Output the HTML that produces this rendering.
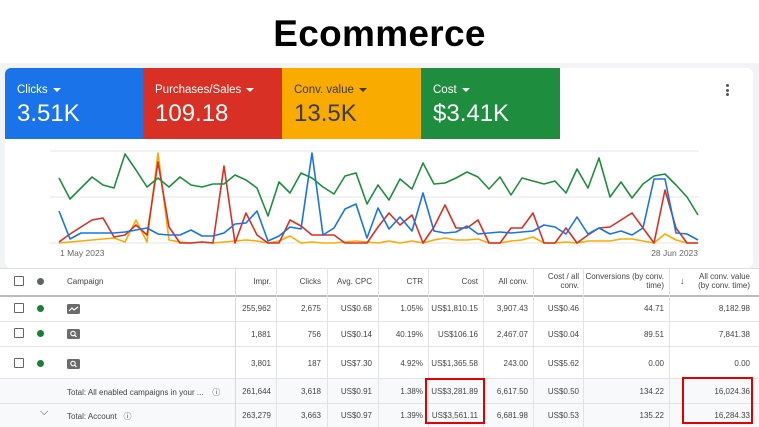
<!DOCTYPE html>
<html><head><meta charset="utf-8"><style>
*{margin:0;padding:0;box-sizing:border-box}
body{width:759px;height:427px;overflow:hidden;background:#fff;font-family:"Liberation Sans",Arial,sans-serif;position:relative}
.title{position:absolute;left:0;width:759px;top:13px;text-align:center;font-weight:bold;font-size:37px;color:#000;letter-spacing:0.3px}
.bg{position:absolute;left:0;top:63px;width:759px;height:205px;background:#f1f3f4}
.card{position:absolute;left:5px;top:68px;width:748px;height:200px;background:#fff;border-radius:6px;overflow:hidden}
.tile{position:absolute;top:0;height:71px;color:#fff}
.tile .l{position:absolute;left:12px;top:16px;font-size:11.5px}
.tile .v{position:absolute;left:12px;top:32px;font-size:24px}
.tri{display:inline-block;width:0;height:0;border-left:4px solid transparent;border-right:4px solid transparent;border-top:4px solid currentColor;margin-left:5px;vertical-align:middle}
.dots{position:absolute;left:721px;top:16px;width:3px}
.dots i{display:block;width:3px;height:3px;background:#555;border-radius:50%;margin-bottom:1.5px}
svg{position:absolute;left:0;top:0}
.tbl{position:absolute;left:0;top:268px;width:759px;height:159px;font-size:8px;color:#444}
.hl{position:absolute;left:0;height:1px;background:#e3e3e3;width:759px}
.vl{position:absolute;width:1px;background:#e3e3e3;top:0;height:159px}
.c{position:absolute;text-align:right}
.cb{position:absolute;left:14px;width:10px;height:10px;border:1.3px solid #666;border-radius:1px}
.dot{position:absolute;left:37px;width:7px;height:7px;border-radius:50%;background:#188038}
.ic{position:absolute;left:67px;width:13px;height:10px;background:#6b6b6b;border-radius:1.5px}
.ic svg{position:absolute;left:0;top:0}
.box{position:absolute;border:2px solid #e00000}
</style></head><body>
<div class="title">Ecommerce</div>
<div class="bg"></div>
<div class="card">
 <div class="tile" style="left:0;width:138px;background:#1a73e8"><div class="l">Clicks<span class="tri"></span></div><div class="v">3.51K</div></div>
 <div class="tile" style="left:138px;width:139px;background:#d93025"><div class="l">Purchases/Sales<span class="tri"></span></div><div class="v">109.18</div></div>
 <div class="tile" style="left:277px;width:139px;background:#f9ab00;color:#3c3c3c"><div class="l">Conv. value<span class="tri"></span></div><div class="v">13.5K</div></div>
 <div class="tile" style="left:416px;width:139px;background:#1e8e3e"><div class="l">Cost<span class="tri"></span></div><div class="v">$3.41K</div></div>
 <div class="dots"><i></i><i></i><i></i></div>
</div>
<svg width="759" height="268" viewBox="0 0 759 268">
<g stroke="#e6e6e6" stroke-width="1"><line x1="50" y1="151" x2="699" y2="151"/><line x1="50" y1="197" x2="699" y2="197"/><line x1="50" y1="243" x2="699" y2="243"/></g>
<g fill="none" stroke-width="1.6" stroke-linejoin="round">
<polyline stroke="#f9ab00" points="59,243 70,242 81,241 92,240 103,239 114,238 125,242 136,220 147,242 158,153 169,240 180,242 191,243 202,242 213,243 224,242 235,241 246,240 257,241 268,243 279,241 290,236 301,243 312,242 323,243 334,243 345,242 356,241 367,242 378,243 389,241 400,243 412,241 423,243 434,240 445,238 456,240 467,240 478,239 489,243 500,243 511,241 522,240 533,237 544,243 555,243 566,242 577,243 588,241 599,241 610,241 621,239 632,239 643,241 654,243 665,234 676,240 687,243 698,243"/>
<polyline stroke="#d93025" points="59,242 70,234 81,227 92,220 103,218 114,237 125,235 136,225 147,235 158,162 169,227 180,243 191,243 202,242 213,243 224,166 235,243 246,213 257,235 268,243 279,243 290,220 301,226 312,235 323,235 334,235 345,243 356,243 367,243 378,227 389,213 400,225 412,215 423,243 434,227 445,205 456,228 467,228 478,220 489,243 500,243 511,228 522,228 533,213 544,243 555,243 566,228 577,243 588,235 599,228 610,227 621,220 632,213 643,228 654,243 665,190 676,228 687,243 698,243"/>
<polyline stroke="#1a73e8" points="59,211 70,239 81,233 92,233 103,233 114,233 125,232 136,230 147,228 158,234 169,235 180,235 191,230 202,236 213,236 224,233 235,224 246,223 257,211 268,241 279,236 290,227 301,229 312,153 323,235 334,228 345,209 356,204 367,238 378,208 389,229 400,217 412,231 423,193 434,231 445,233 456,232 467,226 478,234 489,233 500,232 511,233 522,232 533,231 544,225 555,227 566,234 577,217 588,234 599,228 610,234 621,231 632,235 643,228 654,179 665,179 676,233 687,234 698,240"/>
<polyline stroke="#1e8e3e" points="59,178 70,199 81,188 92,177 103,185 114,188 125,154 136,170 147,187 158,178 169,187 180,177 191,185 202,187 213,184 224,184 235,175 246,180 257,188 268,216 279,182 290,193 301,173 312,178 323,187 334,194 345,176 356,173 367,204 378,185 389,200 400,179 412,189 423,163 434,184 445,183 456,178 467,172 478,177 489,189 500,177 511,195 522,178 533,181 544,184 555,181 566,193 577,169 588,188 599,158 610,197 621,182 632,198 643,184 654,176 665,174 676,185 687,197 698,215"/>
</g>
<text x="60" y="256" font-size="8.5" fill="#666" font-family="Liberation Sans">1 May 2023</text>
<text x="698" y="256" font-size="8.5" fill="#666" font-family="Liberation Sans" text-anchor="end">28 Jun 2023</text>
</svg>
<div class="tbl">
 <div style="position:absolute;left:0;top:110px;width:759px;height:49px;background:#f8f9fa"></div>
 <div class="hl" style="top:0;background:#ddd"></div>
 <div class="hl" style="top:27px;height:1.5px;background:#bbb"></div>
 <div class="hl" style="top:53px"></div>
 <div class="hl" style="top:78px"></div>
 <div class="hl" style="top:110px"></div>
 <div class="hl" style="top:135px"></div>
 <div class="vl" style="left:235px;background:#d8d8d8"></div>
 <div class="vl" style="left:276px"></div><div class="vl" style="left:327px"></div><div class="vl" style="left:378px"></div>
 <div class="vl" style="left:428px"></div><div class="vl" style="left:483px"></div><div class="vl" style="left:533px"></div>
 <div class="vl" style="left:583px"></div><div class="vl" style="left:669px"></div>
 <div class="cb" style="top:8px"></div><div class="dot" style="top:10px;background:#5f6368"></div>
 <div style="position:absolute;left:67px;top:9px">Campaign</div>
 <div class="c" style="right:488px;top:9px">Impr.</div>
 <div class="c" style="right:438px;top:9px">Clicks</div>
 <div class="c" style="right:387px;top:9px">Avg. CPC</div>
 <div class="c" style="right:336px;top:9px">CTR</div>
 <div class="c" style="right:281px;top:9px">Cost</div>
 <div class="c" style="right:231px;top:9px">All conv.</div>
 <div class="c" style="right:180px;top:4px;line-height:9px">Cost / all<br>conv.</div>
 <div class="c" style="right:95px;top:4px;line-height:9px">Conversions (by conv.<br>time)</div>
 <div style="position:absolute;left:680px;top:8px;font-size:9px">↓</div>
 <div class="c" style="right:9px;top:4px;line-height:9px">All conv. value<br>(by conv. time)</div>

 <div class="cb" style="top:35px"></div><div class="dot" style="top:37px"></div>
 <div class="ic" style="top:36px"><svg width="13" height="10"><polyline points="2,7 5,4 7,6 11,3" fill="none" stroke="#fff" stroke-width="1.2"/></svg></div>
 <div class="cb" style="top:60px"></div><div class="dot" style="top:62px"></div>
 <div class="ic" style="top:61px"><svg width="13" height="10"><circle cx="6" cy="4.5" r="2.2" fill="none" stroke="#fff" stroke-width="1.1"/><line x1="7.6" y1="6.1" x2="9.5" y2="8" stroke="#fff" stroke-width="1.2"/></svg></div>
 <div class="cb" style="top:90px"></div><div class="dot" style="top:92px"></div>
 <div class="ic" style="top:91px"><svg width="13" height="10"><circle cx="6" cy="4.5" r="2.2" fill="none" stroke="#fff" stroke-width="1.1"/><line x1="7.6" y1="6.1" x2="9.5" y2="8" stroke="#fff" stroke-width="1.2"/></svg></div>
 <div style="position:absolute;left:67px;top:119px">Total: All enabled campaigns in your ...&nbsp;&nbsp;&nbsp;&nbsp;ⓘ</div>
 <div style="position:absolute;left:40px;top:138px;font-size:11px">⌵</div>
 <div style="position:absolute;left:67px;top:143px">Total: Account&nbsp;&nbsp;&nbsp;ⓘ</div>

 <div class="c" style="right:488px;top:36px">255,962</div><div class="c" style="right:438px;top:36px">2,675</div><div class="c" style="right:387px;top:36px">US$0.68</div><div class="c" style="right:336px;top:36px">1.05%</div><div class="c" style="right:281px;top:36px">US$1,810.15</div><div class="c" style="right:231px;top:36px">3,907.43</div><div class="c" style="right:180px;top:36px">US$0.46</div><div class="c" style="right:95px;top:36px">44.71</div><div class="c" style="right:9px;top:36px">8,182.98</div>
 <div class="c" style="right:488px;top:62px">1,881</div><div class="c" style="right:438px;top:62px">756</div><div class="c" style="right:387px;top:62px">US$0.14</div><div class="c" style="right:336px;top:62px">40.19%</div><div class="c" style="right:281px;top:62px">US$106.16</div><div class="c" style="right:231px;top:62px">2,467.07</div><div class="c" style="right:180px;top:62px">US$0.04</div><div class="c" style="right:95px;top:62px">89.51</div><div class="c" style="right:9px;top:62px">7,841.38</div>
 <div class="c" style="right:488px;top:91px">3,801</div><div class="c" style="right:438px;top:91px">187</div><div class="c" style="right:387px;top:91px">US$7.30</div><div class="c" style="right:336px;top:91px">4.92%</div><div class="c" style="right:281px;top:91px">US$1,365.58</div><div class="c" style="right:231px;top:91px">243.00</div><div class="c" style="right:180px;top:91px">US$5.62</div><div class="c" style="right:95px;top:91px">0.00</div><div class="c" style="right:9px;top:91px">0.00</div>
 <div class="c" style="right:488px;top:119px">261,644</div><div class="c" style="right:438px;top:119px">3,618</div><div class="c" style="right:387px;top:119px">US$0.91</div><div class="c" style="right:336px;top:119px">1.38%</div><div class="c" style="right:281px;top:119px">US$3,281.89</div><div class="c" style="right:231px;top:119px">6,617.50</div><div class="c" style="right:180px;top:119px">US$0.50</div><div class="c" style="right:95px;top:119px">134.22</div><div class="c" style="right:9px;top:119px">16,024.36</div>
 <div class="c" style="right:488px;top:143px">263,279</div><div class="c" style="right:438px;top:143px">3,663</div><div class="c" style="right:387px;top:143px">US$0.97</div><div class="c" style="right:336px;top:143px">1.39%</div><div class="c" style="right:281px;top:143px">US$3,561.11</div><div class="c" style="right:231px;top:143px">6,681.98</div><div class="c" style="right:180px;top:143px">US$0.53</div><div class="c" style="right:95px;top:143px">135.22</div><div class="c" style="right:9px;top:143px">16,284.33</div>
 <div class="box" style="left:425px;top:110px;width:60px;height:46px"></div>
 <div class="box" style="left:682px;top:109px;width:71px;height:47px"></div>
</div>
</body></html>
